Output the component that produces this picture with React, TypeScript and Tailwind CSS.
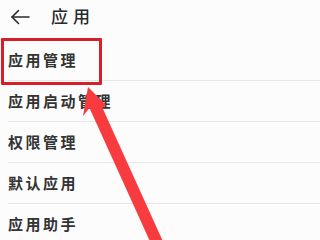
import React from "react";

const items = ["应用管理", "应用启动管理", "权限管理", "默认应用", "应用助手"];

export default function App() {
  return (
    <div
      className="relative w-[320px] h-[240px] overflow-hidden bg-[#fcfcfc] text-[#2a2a2a]"
      style={{ fontFamily: '"Noto Sans CJK SC", "Noto Sans", sans-serif' }}
    >
      <div className="h-[40px] flex items-start pt-[5px]">
        <svg width="20" height="16" viewBox="0 0 20 16" className="ml-[10px] mt-[4px]" fill="none" stroke="#2a2a2a" strokeWidth="1.6" strokeLinecap="round" strokeLinejoin="round">
          <path d="M19 8H2" />
          <path d="M8.5 1.5L2 8l6.5 6.5" />
        </svg>
        <span className="ml-[21px] text-[17px] leading-[22px] tracking-[5px] font-medium">应用</span>
      </div>
      <div className="flex flex-col">
        {items.map((t) => (
          <div key={t} className="h-[41px] flex flex-col">
            <div className="flex-1 flex items-center pl-[8px] text-[15px] tracking-[2.5px] font-semibold text-[#333333]">
              {t}
            </div>
            <div className="ml-[8px] h-[1px] bg-[#e6e6e6]" />
          </div>
        ))}
      </div>
      <div className="absolute left-[1px] top-[38px] w-[101px] h-[47px] border-[3px] border-[#d81e26] rounded-[1px]" />
      <svg className="absolute left-0 top-0" width="320" height="240" viewBox="0 0 320 240">
        <polygon
          points="88,87 106,105 102.5,108 164.6,245 151.6,245 89.5,108 83,116"
          fill="#f73b3e"
        />
      </svg>
    </div>
  );
}
